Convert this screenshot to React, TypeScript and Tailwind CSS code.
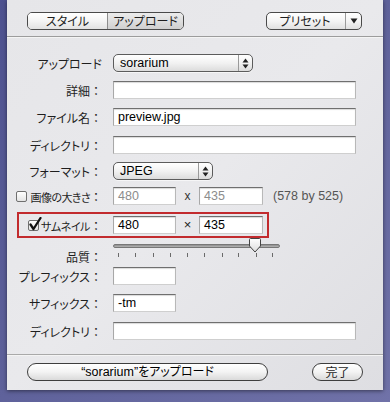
import React from "react";

const jp = { fontFamily: '"Noto Sans CJK JP", "Noto Sans", sans-serif', fontFeatureSettings: '"palt"' } as React.CSSProperties;
const lat = { fontFamily: '"Liberation Sans", Arial, sans-serif' } as React.CSSProperties;

function Label({ text, colon = true, className = "text-[12px]" }: { text: string; colon?: boolean; className?: string }) {
  return (
    <span className={"text-[#1e1e1e] leading-none whitespace-nowrap " + className} style={jp}>
      {text}
      {colon && <span className="inline-block w-[12px] text-center tracking-normal text-[12px]" style={{ fontFeatureSettings: "normal" }}>：</span>}
    </span>
  );
}

function Field({ value = "", w, gray = false }: { value?: string; w: string; gray?: boolean }) {
  return (
    <div
      className={
        "h-[18px] bg-white border border-t-[#6f6f6f] border-l-[#a8a8a8] border-r-[#b8b8b8] border-b-[#cfcfcf] shadow-[inset_0_1px_1px_rgba(0,0,0,0.15)] flex items-center pl-[4px] text-[12.5px] " +
        w +
        (gray ? " text-[#8c8c8c]" : " text-black")
      }
      style={lat}
    >
      {value}
    </div>
  );
}

function Popup({ value, w }: { value: string; w: string }) {
  return (
    <div
      className={
        "h-[18px] rounded-[5px] border border-[#5c5c5c] bg-gradient-to-b from-white via-[#f2f2f2] to-[#dcdcdc] flex items-center shadow-[0_1px_0_rgba(255,255,255,0.6)] " +
        w
      }
    >
      <span className="flex-1 pl-[6px] text-[12.5px] text-black" style={lat}>
        {value}
      </span>
      <span className="w-[14px] h-full border-l border-[#9a9a9a] flex items-center justify-center">
        <svg width="7" height="11" viewBox="0 0 7 11">
          <path d="M3.5 0.5 L6.5 4.5 L0.5 4.5 Z" fill="#222" />
          <path d="M3.5 10.5 L6.5 6.5 L0.5 6.5 Z" fill="#222" />
        </svg>
      </span>
    </div>
  );
}

function Checkbox({ checked = false }: { checked?: boolean }) {
  return (
    <div className="relative w-[11px] h-[11px] rounded-[2px] border border-[#6f6f6f] bg-gradient-to-b from-white to-[#e4e4e4]">
      {checked && (
        <svg className="absolute left-[0px] top-[-4px]" width="13" height="14" viewBox="0 0 13 14">
          <path d="M1.5 7.5 L4.5 12 L11.5 1" stroke="#111" strokeWidth="2.3" fill="none" strokeLinecap="round" strokeLinejoin="round" />
        </svg>
      )}
    </div>
  );
}

export default function App() {
  const ticks = [118, 135, 153, 170, 187, 204, 222, 238, 256, 272];
  return (
    <div className="w-[390px] h-[402px] overflow-hidden bg-gradient-to-br from-[#4e5290] via-[#5f629b] to-[#7072a8]">
      <div className="ml-[7px] w-[376px] h-[390px] bg-gradient-to-br from-[#e6e6e9] via-[#e9e9ec] to-[#dedee2] shadow-[0_1px_4px_rgba(0,0,0,0.5)] flex flex-col">
        {/* toolbar */}
        <div className="h-[37px] flex items-start pt-[12px] border-b border-[#9c9c9c] shrink-0">
          <div className="ml-[20px] w-[157px] h-[18px] rounded-[5px] border border-[#4a4a4a] flex overflow-hidden">
            <div className="w-[80px] h-full bg-gradient-to-b from-white via-[#f4f4f4] to-[#e2e2e2] flex items-center justify-center border-r border-[#8c8c8c]">
              <Label text="スタイル" colon={false} />
            </div>
            <div className="flex-1 h-full bg-gradient-to-b from-[#ececec] via-[#dedede] to-[#cfcfcf] flex items-center justify-center">
              <Label text="アップロード" colon={false} />
            </div>
          </div>
          <div className="ml-[82px] w-[96px] h-[18px] rounded-[5px] border border-[#4a4a4a] flex overflow-hidden bg-gradient-to-b from-white via-[#f4f4f4] to-[#e0e0e0]">
            <div className="flex-1 flex items-center justify-center pr-[2px]">
              <Label text="プリセット" colon={false} />
            </div>
            <div className="w-[16px] border-l border-[#9a9a9a] flex items-center justify-center">
              <svg width="8" height="6" viewBox="0 0 8 6">
                <path d="M0.5 0.5 L7.5 0.5 L4 5.5 Z" fill="#222" />
              </svg>
            </div>
          </div>
        </div>
        <div className="h-px bg-[#f4f4f4] shrink-0" />

        {/* content */}
        <div className="flex flex-col">
          <div className="mt-[16px] flex items-center h-[18px]">
            <div className="w-[95px] text-right"><Label text="アップロード" colon={false} /></div>
            <div className="ml-[11px]"><Popup value="sorarium" w="w-[140px]" /></div>
          </div>
          <div className="mt-[9px] flex items-center h-[18px]">
            <div className="w-[95px] text-right"><Label text="詳細" /></div>
            <div className="ml-[11px]"><Field w="w-[243px]" /></div>
          </div>
          <div className="mt-[9px] flex items-center h-[18px]">
            <div className="w-[95px] text-right"><Label text="ファイル名" /></div>
            <div className="ml-[11px]"><Field value="preview.jpg" w="w-[243px]" /></div>
          </div>
          <div className="mt-[10px] flex items-center h-[18px]">
            <div className="w-[95px] text-right"><Label text="ディレクトリ" /></div>
            <div className="ml-[11px]"><Field w="w-[243px]" /></div>
          </div>
          <div className="mt-[8px] flex items-center h-[18px]">
            <div className="w-[95px] text-right"><Label text="フォーマット" /></div>
            <div className="ml-[11px]"><Popup value="JPEG" w="w-[100px]" /></div>
          </div>
          <div className="mt-[7px] flex items-center h-[18px]">
            <div className="w-[95px] flex items-center">
              <div className="ml-[9px] shrink-0"><Checkbox /></div>
              <div className="flex-1 text-right"><Label text="画像の大きさ" className="text-[11px] tracking-[-0.6px]" /></div>
            </div>
            <div className="ml-[11px]"><Field value="480" w="w-[63px]" gray /></div>
            <span className="w-[23px] text-center text-[12px] text-[#333]" style={lat}>x</span>
            <Field value="435" w="w-[64px]" gray />
            <span className="ml-[10px] text-[12.5px] text-[#555]" style={lat}>(578 by 525)</span>
          </div>
          <div className="mt-[7px] ml-[10px] w-[252px] h-[26px] border-2 border-[#c22b2e] flex items-center">
            <div className="w-[83px] flex items-center">
              <div className="ml-[9px] shrink-0"><Checkbox checked /></div>
              <div className="flex-1 text-right"><Label text="サムネイル" className="text-[11px] tracking-[-0.4px]" /></div>
            </div>
            <div className="ml-[11px]"><Field value="480" w="w-[63px]" /></div>
            <span className="w-[23px] text-center text-[13px] text-[#222]" style={lat}>×</span>
            <Field value="435" w="w-[64px]" />
          </div>
          <div className="mt-[2px] flex h-[19px]">
            <div className="w-[95px] text-right pt-[4px]"><Label text="品質" /></div>
            <div className="ml-[11px] relative w-[167px] h-full">
              <div className="absolute left-0 right-0 top-[4px] h-[4px] rounded-full bg-gradient-to-b from-[#8d8d8d] to-[#b5b5b5] border border-[#777]" />
              {ticks.map((t) => (
                <div key={t} className="absolute top-[13px] w-px h-[4px] bg-[#6a6a6a]" style={{ left: t - 113 }} />
              ))}
              <svg className="absolute top-[-2px]" style={{ left: 255 - 113 - 7 }} width="14" height="15" viewBox="0 0 14 15">
                <defs>
                  <linearGradient id="th" x1="0" x2="0" y1="0" y2="1">
                    <stop offset="0" stopColor="#ffffff" />
                    <stop offset="1" stopColor="#dcdcdc" />
                  </linearGradient>
                </defs>
                <path d="M1.5 1.5 Q1.5 0.5 2.5 0.5 L11.5 0.5 Q12.5 0.5 12.5 1.5 L12.5 8 L7 14 L1.5 8 Z" fill="url(#th)" stroke="#444" strokeWidth="1" />
              </svg>
            </div>
          </div>
          <div className="mt-[8px] flex items-center h-[18px]">
            <div className="w-[95px] text-right"><Label text="プレフィックス" /></div>
            <div className="ml-[11px]"><Field w="w-[63px]" /></div>
          </div>
          <div className="mt-[9px] flex items-center h-[18px]">
            <div className="w-[95px] text-right"><Label text="サフィックス" /></div>
            <div className="ml-[11px]"><Field value="-tm" w="w-[63px]" /></div>
          </div>
          <div className="mt-[10px] flex items-center h-[18px]">
            <div className="w-[95px] text-right"><Label text="ディレクトリ" /></div>
            <div className="ml-[11px]"><Field w="w-[243px]" /></div>
          </div>
          <div className="mt-[14px] h-px bg-[#a9a9a9]" />
          <div className="h-px bg-[#f4f4f4]" />
          <div className="mt-[7px] flex items-center h-[18px]">
            <div className="ml-[20px] w-[241px] h-[18px] rounded-full border border-[#3e3e3e] bg-gradient-to-b from-white via-[#f3f3f3] to-[#dadada] flex items-center justify-center">
              <span className="text-[12px] text-black" style={jp}>
                <span style={lat} className="text-[12.5px]">“sorarium”</span>をアップロード
              </span>
            </div>
            <div className="ml-[44px] w-[51px] h-[18px] rounded-full border border-[#3e3e3e] bg-gradient-to-b from-white via-[#f3f3f3] to-[#dadada] flex items-center justify-center">
              <Label text="完了" colon={false} />
            </div>
          </div>
        </div>
      </div>
    </div>
  );
}
